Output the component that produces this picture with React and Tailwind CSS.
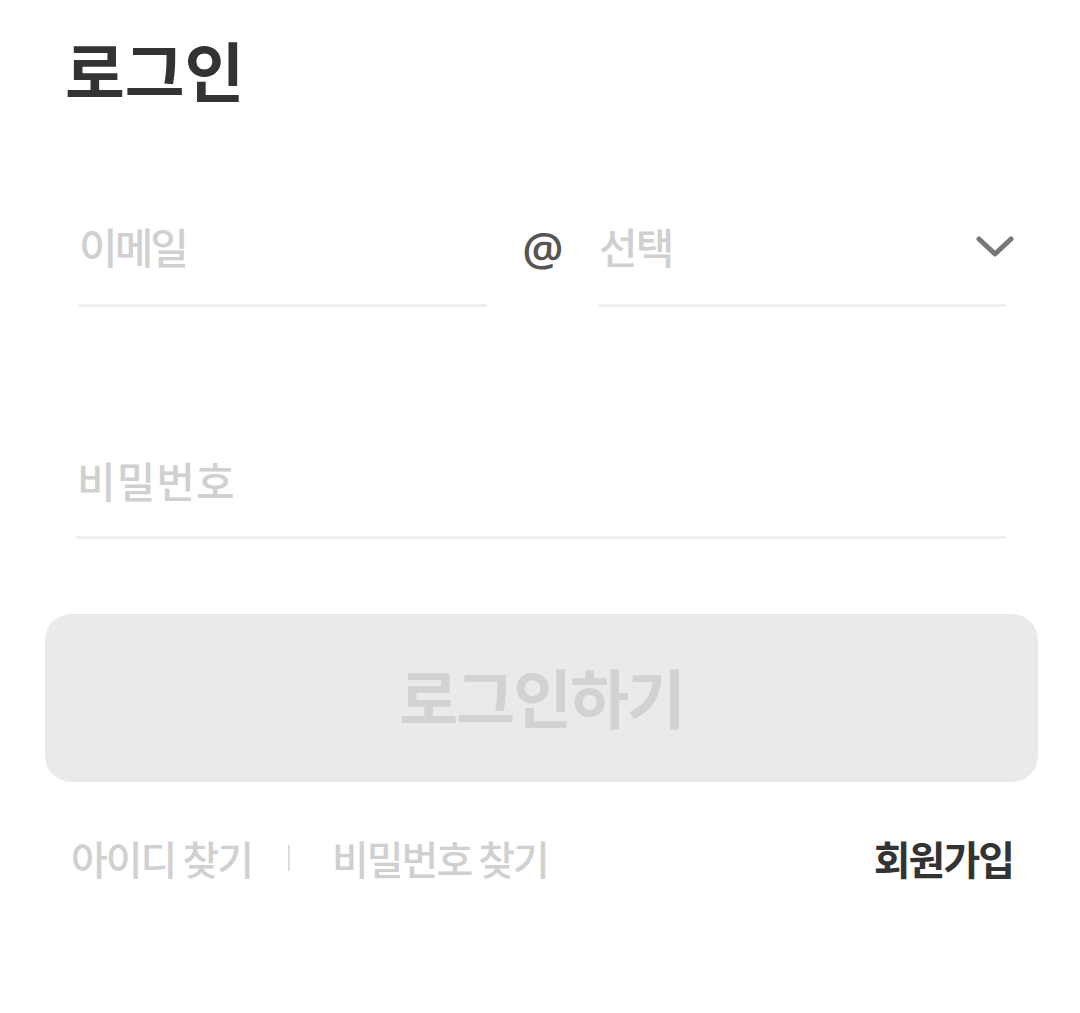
import React from "react";

const font = { fontFamily: '"Noto Sans CJK KR", "Noto Sans", sans-serif' };

function Chevron() {
  return (
    <svg width="38" height="24" viewBox="0 0 38 24" fill="none">
      <path d="M3 4 L19 19 L35 4" stroke="#777777" strokeWidth="5" strokeLinecap="round" strokeLinejoin="round" />
    </svg>
  );
}

export default function App() {
  return (
    <div className="w-[1080px] h-[1013px] bg-white pl-[45px]" style={font}>
      <div className="w-[993px]">
        {/* Title */}
        <h1 className="pl-[20px] pt-[34px] h-[200px] text-[65px] leading-[1.1] font-bold text-[#333333]">
          로그인
        </h1>

        {/* Email row */}
        <div className="flex items-end pl-[34px] pr-[32px] h-[107px]">
          <div className="w-[408px] h-full flex items-center border-b-[3px] border-[#eeeeee]">
            <span className="text-[42px] text-[#d0d0d0] font-medium tracking-[-3px] pb-[14px]">이메일</span>
          </div>
          <div className="w-[112px] h-full flex items-center justify-center pb-[12px]">
            <span className="text-[46px] text-[#555555] font-semibold" style={{ fontFamily: '"Open Sans", sans-serif' }}>@</span>
          </div>
          <div className="flex-1 h-full flex items-center justify-between border-b-[3px] border-[#eeeeee]">
            <span className="text-[42px] text-[#d0d0d0] font-medium tracking-[-2px] pb-[14px]">선택</span>
            <span className="pb-[10px] -mr-[8px]"><Chevron /></span>
          </div>
        </div>

        {/* Password */}
        <div className="mt-[126px] ml-[31px] mr-[32px] h-[106px] flex items-center border-b-[3px] border-[#eeeeee]">
          <span className="text-[42px] text-[#d0d0d0] font-medium tracking-[1px] pl-[1px] pb-[10px]">비밀번호</span>
        </div>

        {/* Button */}
        <button className="mt-[75px] w-full h-[168px] rounded-[26px] bg-[#eaeaea] flex items-center justify-center">
          <span className="text-[64px] font-bold text-[#d2d2d2] tracking-[-2px] pb-[6px]">로그인하기</span>
        </button>

        {/* Footer links */}
        <div className="mt-[46px] flex items-center justify-between pl-[26px] pr-[27px]">
          <div className="flex items-center text-[40px] font-medium text-[#d0d0d0] tracking-[-2px]">
            <span>아이디 찾기</span>
            <span className="ml-[36px] mr-[42px] w-[2px] h-[26px] bg-[#dddddd]" />
            <span>비밀번호 찾기</span>
          </div>
          <span className="text-[40px] font-bold text-[#333333] tracking-[-2px] -mr-[2px]">회원가입</span>
        </div>
      </div>
    </div>
  );
}
